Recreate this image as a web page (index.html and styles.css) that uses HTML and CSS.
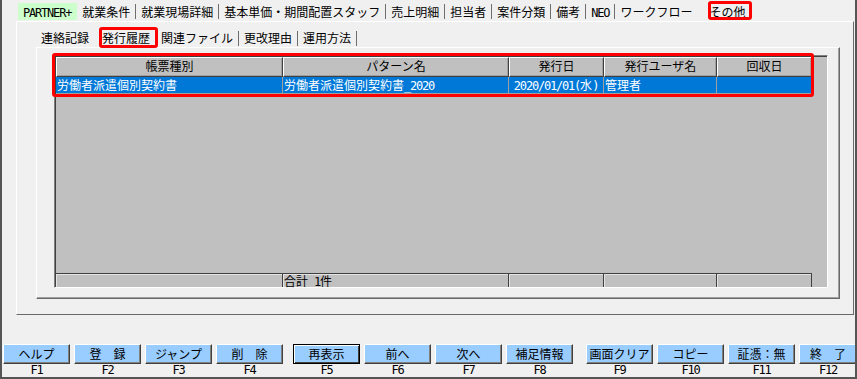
FILE: index.html
```html
<!DOCTYPE html>
<html lang="ja">
<head>
<meta charset="utf-8">
<title>その他 - 発行履歴</title>
<link rel="stylesheet" href="styles.css">
</head>
<body>
<div class="win">
  <div class="toptabs">
    <div class="tt partner"><span class="en">PARTNER+</span></div>
    <div class="tt">就業条件</div><i class="sep"></i>
    <div class="tt">就業現場詳細</div><i class="sep"></i>
    <div class="tt">基本単価・期間配置スタッフ</div><i class="sep"></i>
    <div class="tt">売上明細</div><i class="sep"></i>
    <div class="tt">担当者</div><i class="sep"></i>
    <div class="tt">案件分類</div><i class="sep"></i>
    <div class="tt">備考</div><i class="sep"></i>
    <div class="tt"><span class="en">NEO</span></div><i class="sep"></i>
    <div class="tt">ワークフロー</div>
    <div class="tt sel">その他</div>
  </div>
  <div class="outer">
    <div class="subtabs">
      <div class="st first">連絡記録</div>
      <div class="st sel">発行履歴</div><i class="sep2"></i>
      <div class="st">関連ファイル</div><i class="sep2"></i>
      <div class="st">更改理由</div><i class="sep2"></i>
      <div class="st">運用方法</div><i class="sep2"></i>
    </div>
    <div class="page">
      <div class="grid">
        <div class="ghead">
          <div class="h w1">帳票種別</div>
          <div class="h w2">パターン名</div>
          <div class="h w3">発行日</div>
          <div class="h w4">発行ユーザ名</div>
          <div class="h w5">回収日</div>
        </div>
        <div class="grow">
          <div class="r w1">労働者派遣個別契約書</div>
          <div class="r w2">労働者派遣個別契約書<span class="en">_2020</span></div>
          <div class="r w3 ctr"><span class="en">2020/01/01(</span>水<span class="en">)</span></div>
          <div class="r w4">管理者</div>
          <div class="r w5"></div>
        </div>
        <div class="gfill"></div>
        <div class="gfoot">
          <div class="f w1"></div>
          <div class="f w2">合計<span class="en">&nbsp;1</span>件</div>
          <div class="f w3"></div>
          <div class="f w4"></div>
          <div class="f w5"></div>
        </div>
        <div class="mark"></div>
      </div>
    </div>
  </div>
  <div class="fbar">
    <div class="grp">
      <div class="key"><div class="btn">ヘルプ</div><div class="fk en">F1</div></div>
      <div class="key"><div class="btn">登　録</div><div class="fk en">F2</div></div>
      <div class="key"><div class="btn">ジャンプ</div><div class="fk en">F3</div></div>
      <div class="key"><div class="btn">削　除</div><div class="fk en">F4</div></div>
    </div>
    <div class="grp g2">
      <div class="key"><div class="btn def">再表示</div><div class="fk en">F5</div></div>
      <div class="key"><div class="btn">前へ</div><div class="fk en">F6</div></div>
      <div class="key"><div class="btn">次へ</div><div class="fk en">F7</div></div>
      <div class="key"><div class="btn">補足情報</div><div class="fk en">F8</div></div>
    </div>
    <div class="grp g3">
      <div class="key"><div class="btn">画面クリア</div><div class="fk en">F9</div></div>
      <div class="key"><div class="btn">コピー</div><div class="fk en">F10</div></div>
      <div class="key"><div class="btn">証憑：無</div><div class="fk en">F11</div></div>
      <div class="key last"><div class="btn">終　了</div><div class="fk en">F12</div></div>
    </div>
  </div>
</div>
</body>
</html>
```
FILE: styles.css
```css
html, body {
  margin: 0;
  padding: 0;
}
body {
  width: 857px;
  height: 379px;
  overflow: hidden;
  background: #f0f0f0;
  font-family: "Noto Sans CJK JP", "Noto Sans", sans-serif;
  font-size: 12px;
  color: #000;
}
.win {
  box-sizing: border-box;
  width: 857px;
  height: 379px;
  border-left: 2px solid #555;
  border-right: 2px solid #555;
  border-bottom: 2px solid #555;
  background: #f0f0f0;
  display: flex;
  flex-direction: column;
  overflow: hidden;
}
.en {
  font-family: "DejaVu Sans Mono", "Noto Sans CJK JP", monospace;
  font-size: 12px;
  letter-spacing: -1.2px;
}

/* top tabs */
.toptabs {
  flex: none;
  height: 21px;
  box-sizing: border-box;
  padding: 3px 0 0 16px;
  display: flex;
  align-items: flex-start;
}
.tt {
  height: 17px;
  line-height: 17px;
  padding: 0 5px;
  white-space: nowrap;
}
.tt.partner {
  background: #ccffcc;
  padding: 0 6px 0 5px;
}
.sep {
  display: block;
  width: 1px;
  height: 15px;
  margin-top: 1px;
  background: #6e6e6e;
}
.tt.sel {
  position: relative;
  margin-left: 7px;
}
.tt.sel::after {
  content: "";
  position: absolute;
  left: 4px;
  right: -2px;
  top: -2px;
  height: 19px;
  box-sizing: border-box;
  border: 3px solid #ff0000;
  border-radius: 3px;
}

/* outer tab page */
.outer {
  flex: none;
  margin-left: 14px;
  width: 838px;
  height: 294px;
  box-sizing: border-box;
  border-left: 1px solid #fff;
  border-top: 1px solid #fff;
  border-right: 1px solid #696969;
  border-bottom: 1px solid #696969;
}
.subtabs {
  height: 25px;
  box-sizing: border-box;
  padding: 7px 0 0 19px;
  display: flex;
  align-items: flex-start;
}
.st {
  height: 18px;
  line-height: 18px;
  padding: 0 5px;
  white-space: nowrap;
}
.st.first {
  padding-right: 8px;
}
.sep2 {
  display: block;
  width: 1px;
  height: 15px;
  margin-top: 2px;
  background: #6e6e6e;
}
.st.sel {
  position: relative;
}
.st.sel::after {
  content: "";
  position: absolute;
  left: 2px;
  right: -3px;
  top: -2px;
  bottom: -1px;
  box-sizing: border-box;
  border: 3px solid #ff0000;
  border-radius: 3px;
}

/* inner page */
.page {
  margin-left: 19px;
  width: 804px;
  height: 252px;
  box-sizing: border-box;
  border-left: 1px solid #fff;
  border-top: 1px solid #fff;
  border-right: 1px solid #696969;
  border-bottom: 1px solid #696969;
  box-shadow: inset -1px -1px 0 #a0a0a0;
  padding: 7px 11px 10px 17px;
}

/* grid */
.grid {
  position: relative;
  height: 233px;
  box-sizing: border-box;
  background: #c0c0c0;
  border-top: 1px solid #808080;
  border-left: 1px solid #808080;
  border-right: 1px solid #fff;
  border-bottom: 1px solid #fff;
  box-shadow: inset 1px 1px 0 #404040;
  padding: 1px 0 0 1px;
  display: flex;
  flex-direction: column;
}
.w1 { width: 227px; }
.w2 { width: 226px; }
.w3 { width: 95px; }
.w4 { width: 113px; }
.w5 { width: 95px; }

.ghead {
  flex: none;
  display: flex;
  height: 20px;
}
.h {
  flex: none;
  box-sizing: border-box;
  height: 20px;
  line-height: 16px;
  text-align: center;
  border-top: 1px solid #fff;
  border-left: 1px solid #fff;
  border-right: 1px solid #404040;
  border-bottom: 1px solid #404040;
  box-shadow: inset -1px -1px 0 #a0a0a0;
  white-space: nowrap;
}
.grow {
  flex: none;
  display: flex;
  height: 17px;
}
.r {
  flex: none;
  box-sizing: border-box;
  height: 17px;
  line-height: 16px;
  padding-left: 1px;
  background: #0078d7;
  color: #fff;
  border-right: 1px solid #a0a0a0;
  border-bottom: 1px solid #a0a0a0;
  white-space: nowrap;
  overflow: hidden;
}
.r.ctr {
  text-align: center;
  padding-left: 0;
}
.gfill {
  flex: 1;
}
.gfoot {
  flex: none;
  display: flex;
  height: 14px;
}
.f {
  flex: none;
  box-sizing: border-box;
  height: 14px;
  line-height: 13px;
  padding-left: 1px;
  border-top: 1px solid #404040;
  border-right: 1px solid #404040;
  box-shadow: inset 1px 1px 0 #e4e4e4;
  white-space: nowrap;
}
.mark {
  position: absolute;
  left: -3px;
  top: -3px;
  width: 762px;
  height: 44px;
  box-sizing: border-box;
  border: 3px solid #ff0000;
  border-radius: 3px;
}

/* function keys */
.fbar {
  flex: none;
  margin-top: 29px;
  padding-left: 1px;
  display: flex;
}
.grp {
  display: flex;
  gap: 4px;
}
.g2 { margin-left: 10px; }
.g3 { margin-left: 13px; }
.key {
  flex: none;
  width: 67px;
  display: flex;
  flex-direction: column;
  align-items: center;
}
.key.last {
  width: 58px;
}
.btn {
  box-sizing: border-box;
  width: 100%;
  height: 20px;
  line-height: 18px;
  text-align: center;
  background: #99ccff;
  border: 1px solid;
  border-color: #fff #404040 #404040 #fff;
  box-shadow: inset -1px -1px 0 #808080;
  white-space: nowrap;
}
.btn.def {
  border-color: #000;
  box-shadow: inset 1px 1px 0 #fff, inset -1px -1px 0 #404040;
}
.fk {
  height: 13px;
  line-height: 13px;
}
```
